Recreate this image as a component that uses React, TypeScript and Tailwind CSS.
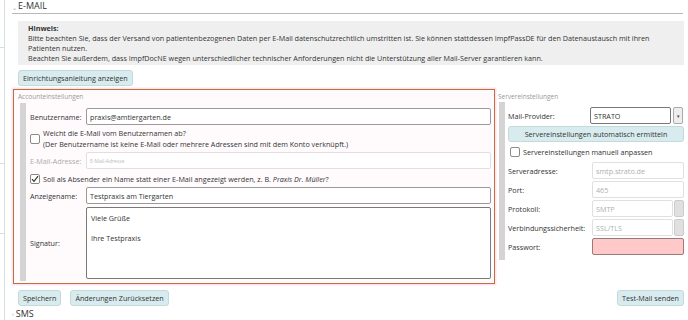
import React from "react";

const Check = ({ checked }: { checked?: boolean }) => (
  <div className="w-[10px] h-[10px] border border-[#8a8a8a] rounded-[2px] bg-white flex items-center justify-center shrink-0">
    {checked && (
      <svg width="8" height="8" viewBox="0 0 8 8">
        <path d="M1 4.2 L3 6.3 L7 1.2" stroke="#333" strokeWidth="1.2" fill="none" />
      </svg>
    )}
  </div>
);

const Btn = ({ children, className = "" }: { children: React.ReactNode; className?: string }) => (
  <div className={"h-[16px] px-[4px] flex items-center bg-[#d8ecef] border border-[#c3d9dc] rounded-[3px] text-[#333] whitespace-nowrap " + className}>
    {children}
  </div>
);

export default function App() {
  return (
    <div
      className="w-[688px] h-[320px] bg-white flex overflow-hidden text-[7.2px] leading-[10px] text-[#333]"
      style={{ fontFamily: '"Open Sans", "Noto Sans", sans-serif' }}
    >
      {/* left strip */}
      <div className="w-[5px] border-r border-[#d3dfe0] flex flex-col">
        <div className="h-[48px] border-b border-[#d3dfe0]" />
        <div className="h-[116px] border-b border-[#d3dfe0]" />
        <div className="h-[70px] border-b border-[#d3dfe0]" />
      </div>

      {/* main */}
      <div className="flex-1 pl-[7px] pr-[4px] flex flex-col">
        {/* header */}
        <div className="h-[15px] border-b border-[#b8b8b8] flex items-end pb-[1px] mr-[1px]">
          <span className="text-[6px] text-[#999] mr-[1px] leading-[6px] mb-[1px]">⌄</span>
          <span className="text-[9px] leading-[12px] text-[#333]">E-MAIL</span>
        </div>

        {/* note */}
        <div className="mt-[7px] ml-[6px] bg-[#efefef] px-[10px] pt-[2px] pb-[3px] h-[44px]">
          <div className="font-bold whitespace-nowrap">Hinweis:</div>
          <div className="whitespace-nowrap">
            Bitte beachten Sie, dass der Versand von patientenbezogenen Daten per E-Mail datenschutzrechtlich umstritten ist. Sie können stattdessen ImpfPassDE für den Datenaustausch mit ihren
          </div>
          <div className="whitespace-nowrap">Patienten nutzen.</div>
          <div className="whitespace-nowrap">
            Beachten Sie außerdem, dass ImpfDocNE wegen unterschiedlicher technischer Anforderungen nicht die Unterstützung aller Mail-Server garantieren kann.
          </div>
        </div>

        <div className="mt-[5px] ml-[6px] flex">
          <Btn>Einrichtungsanleitung anzeigen</Btn>
        </div>

        {/* sections */}
        <div className="mt-[3px] ml-[1px] flex">
          {/* account */}
          <div className="w-[482px] h-[195px] border border-[#c0703e] bg-[#fffbfd] shadow-[0_0_0_1.5px_#fbe3ef] flex flex-col">
            <div className="h-[13px] pl-[4px] pt-[2px] text-[6.5px] leading-[9px] text-[#999]">Accounteinstellungen</div>
            <div className="flex flex-1 pb-[2px]">
              <div className="ml-[6px] w-[6px] bg-[#d4d4d4]" />
              <div className="flex-1 pl-[4px] pr-[3px] pt-[5px] flex flex-col">
                <div className="flex items-center h-[17px]">
                  <div className="w-[56px]">Benutzername:</div>
                  <div className="flex-1 h-[17px] border border-[#9a9a9a] rounded-[2px] bg-white px-[3px] flex items-center">
                    praxis@amtiergarten.de
                  </div>
                </div>
                <div className="flex items-center mt-[3px] h-[21px]">
                  <Check />
                  <div className="ml-[3px] leading-[11px]">
                    <div>Weicht die E-Mail vom Benutzernamen ab?</div>
                    <div>(Der Benutzername ist keine E-Mail oder mehrere Adressen sind mit dem Konto verknüpft.)</div>
                  </div>
                </div>
                <div className="flex items-center h-[17px] mt-[3px]">
                  <div className="w-[56px] text-[#aaa]">E-Mail-Adresse:</div>
                  <div className="flex-1 h-[17px] border border-[#e6dde2] rounded-[2px] bg-white px-[3px] flex items-center text-[5px] text-[#bbb]">
                    E-Mail-Adresse
                  </div>
                </div>
                <div className="flex items-center h-[13px] mt-[3px]">
                  <Check checked />
                  <div className="ml-[3px]">
                    Soll als Absender ein Name statt einer E-Mail angezeigt werden, z. B. <i>Praxis Dr. Müller</i>?
                  </div>
                </div>
                <div className="flex items-center h-[17px] mt-[2px]">
                  <div className="w-[56px]">Anzeigename:</div>
                  <div className="flex-1 h-[17px] border border-[#9a9a9a] rounded-[2px] bg-white px-[3px] flex items-center">
                    Testpraxis am Tiergarten
                  </div>
                </div>
                <div className="flex items-center h-[72px] mt-[3px]">
                  <div className="w-[56px]">Signatur:</div>
                  <div className="flex-1 h-[72px] border border-[#7a7a7a] rounded-[2px] bg-white px-[4px] pt-[5px] leading-[10px]">
                    <div>Viele Grüße</div>
                    <div className="h-[10px]" />
                    <div>Ihre Testpraxis</div>
                  </div>
                </div>
              </div>
            </div>
          </div>

          {/* server */}
          <div className="flex-1 ml-[2px] flex flex-col">
            <div className="h-[13px] pl-[1px] pt-[3px] text-[6.5px] leading-[9px] text-[#999]">Servereinstellungen</div>
            <div className="flex">
              <div className="ml-[2px] w-[6px] h-[158px] bg-[#d4d4d4]" />
              <div className="flex-1 pl-[3px] pt-[5px] flex flex-col">
                <div className="flex items-center h-[17px]">
                  <div className="w-[82px]">Mail-Provider:</div>
                  <div className="w-[81px] h-[17px] border border-[#777] rounded-[2px] bg-white px-[3px] flex items-center">STRATO</div>
                  <div className="ml-[2px] w-[10px] h-[17px] border border-[#aaa] rounded-[2px] bg-[#eee] flex items-center justify-center text-[5px] text-[#444]">▾</div>
                </div>
                <Btn className="mt-[2px] justify-center">Servereinstellungen automatisch ermitteln</Btn>
                <div className="flex items-center h-[12px] mt-[4px] pl-[2px]">
                  <Check />
                  <div className="ml-[3px]">Servereinstellungen manuell anpassen</div>
                </div>
                {[
                  ["Serveradresse:", "smtp.strato.de", false],
                  ["Port:", "465", false],
                  ["Protokoll:", "SMTP", true],
                  ["Verbindungssicherheit:", "SSL/TLS", true],
                ].map(([l, v, s], i) => (
                  <div key={i} className={"flex items-center h-[17px] " + (i === 0 ? "mt-[4px]" : "mt-[2px]")}>
                    <div className="w-[84px]">{l as string}</div>
                    <div className="flex-1 h-[17px] flex">
                      <div className="flex-1 border border-[#e0e0e0] rounded-[2px] bg-white px-[3px] flex items-center text-[#b0b0b0]">
                        {v as string}
                      </div>
                      {s && <div className="ml-[1px] w-[10px] border border-[#ccc] rounded-[2px] bg-[#e0e0e0]" />}
                    </div>
                  </div>
                ))}
                <div className="flex items-center h-[17px] mt-[2px]">
                  <div className="w-[84px]">Passwort:</div>
                  <div className="flex-1 h-[17px] border border-[#9a7a7a] rounded-[2px] bg-[#ffc9c9]" />
                </div>
              </div>
            </div>
          </div>
        </div>

        {/* bottom buttons */}
        <div className="mt-[6px] ml-[6px] flex items-center">
          <Btn>Speichern</Btn>
          <Btn className="ml-[9px]">Änderungen Zurücksetzen</Btn>
          <div className="flex-1" />
          <Btn>Test-Mail senden</Btn>
        </div>

        <div className="mt-[2px] flex items-center h-[12px]">
          <span className="text-[6px] text-[#999] mr-[2px]">›</span>
          <span className="text-[9px] leading-[12px]">SMS</span>
        </div>
      </div>
    </div>
  );
}
